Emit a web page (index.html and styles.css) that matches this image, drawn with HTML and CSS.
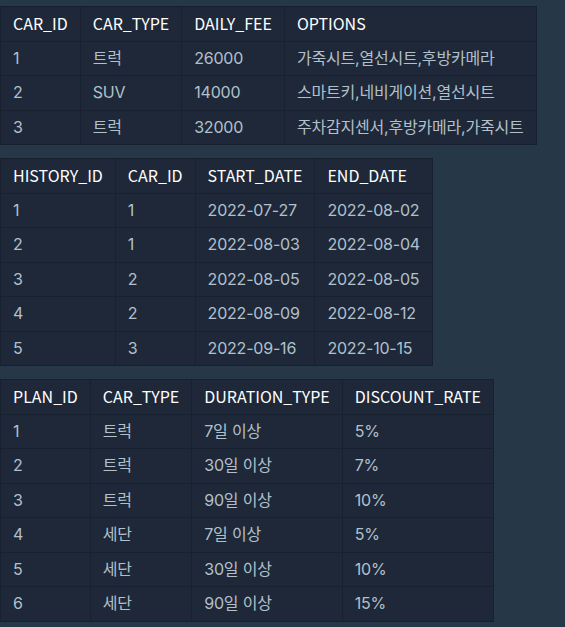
FILE: index.html
```html
<!DOCTYPE html>
<html lang="ko">
<head>
<meta charset="utf-8">
<link rel="stylesheet" href="styles.css">
</head>
<body>
<div class="content">
<table class="data">
  <thead><tr><th>CAR_ID</th><th>CAR_TYPE</th><th>DAILY_FEE</th><th>OPTIONS</th></tr></thead>
  <tbody>
    <tr><td>1</td><td>트럭</td><td>26000</td><td>가죽시트,열선시트,후방카메라</td></tr>
    <tr><td>2</td><td>SUV</td><td>14000</td><td>스마트키,네비게이션,열선시트</td></tr>
    <tr><td>3</td><td>트럭</td><td>32000</td><td>주차감지센서,후방카메라,가죽시트</td></tr>
  </tbody>
</table>
<table class="data">
  <thead><tr><th>HISTORY_ID</th><th>CAR_ID</th><th>START_DATE</th><th>END_DATE</th></tr></thead>
  <tbody>
    <tr><td>1</td><td>1</td><td>2022-07-27</td><td>2022-08-02</td></tr>
    <tr><td>2</td><td>1</td><td>2022-08-03</td><td>2022-08-04</td></tr>
    <tr><td>3</td><td>2</td><td>2022-08-05</td><td>2022-08-05</td></tr>
    <tr><td>4</td><td>2</td><td>2022-08-09</td><td>2022-08-12</td></tr>
    <tr><td>5</td><td>3</td><td>2022-09-16</td><td>2022-10-15</td></tr>
  </tbody>
</table>
<table class="data">
  <thead><tr><th>PLAN_ID</th><th>CAR_TYPE</th><th>DURATION_TYPE</th><th>DISCOUNT_RATE</th></tr></thead>
  <tbody>
    <tr><td>1</td><td>트럭</td><td>7일 이상</td><td>5%</td></tr>
    <tr><td>2</td><td>트럭</td><td>30일 이상</td><td>7%</td></tr>
    <tr><td>3</td><td>트럭</td><td>90일 이상</td><td>10%</td></tr>
    <tr><td>4</td><td>세단</td><td>7일 이상</td><td>5%</td></tr>
    <tr><td>5</td><td>세단</td><td>30일 이상</td><td>10%</td></tr>
    <tr><td>6</td><td>세단</td><td>90일 이상</td><td>15%</td></tr>
  </tbody>
</table>
</div>
</body>
</html>
```
FILE: styles.css
```css
html, body {
  margin: 0;
  padding: 0;
  background: #263747;
}
body {
  font-family: "Inter", "Noto Sans CJK KR", sans-serif;
  font-size: 16px;
  color: #b2c0cc;
}
.content {
  padding-top: 6px;
  display: flex;
  flex-direction: column;
  align-items: flex-start;
  gap: 13px;
}
.data {
  border-collapse: collapse;
  background: #1e2838;
}
.data th,
.data td {
  border: 1px solid #172130;
  padding: 6px 12px;
  line-height: 21.5px;
  text-align: left;
  white-space: nowrap;
}
.data td {
  letter-spacing: -0.2px;
}
.data th {
  font-family: "Noto Sans CJK KR", sans-serif;
  color: #ffffff;
  font-weight: normal;
}
```
